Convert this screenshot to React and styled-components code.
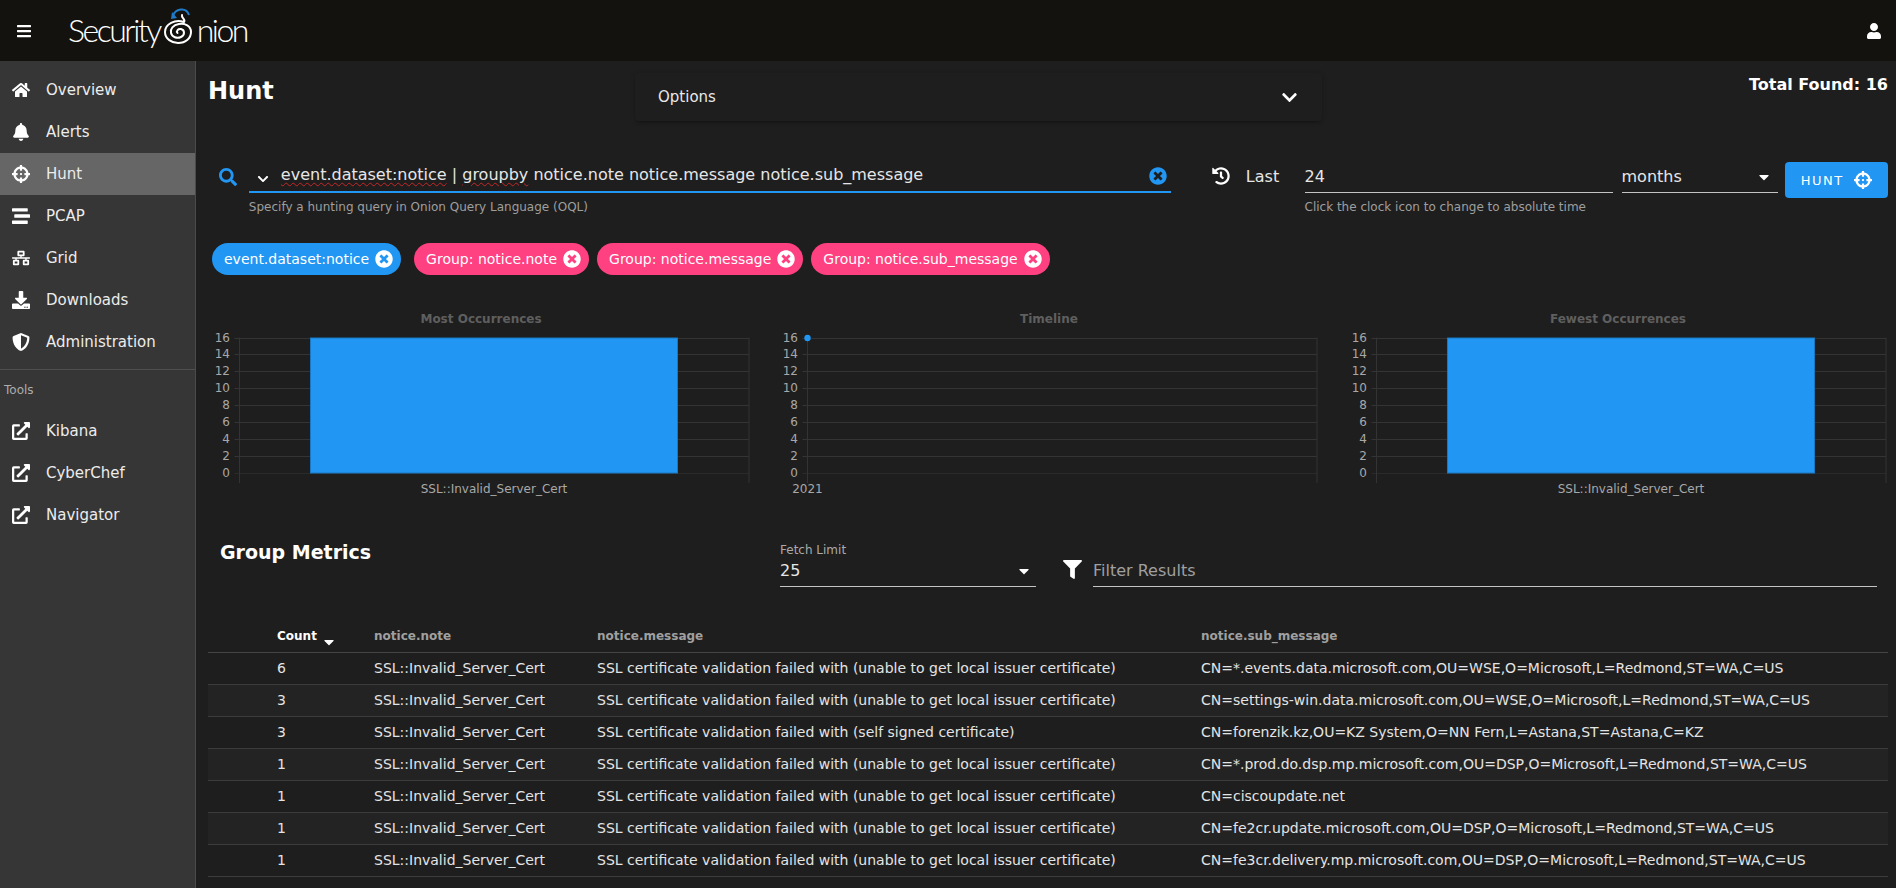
import React from 'react';
import styled, { createGlobalStyle } from 'styled-components';
import {
  FaBars, FaUser, FaHome, FaBell, FaCrosshairs, FaStream, FaNetworkWired, FaDownload,
  FaShieldAlt, FaExternalLinkAlt, FaSearch, FaChevronDown, FaTimesCircle, FaHistory,
  FaCaretDown, FaFilter,
} from 'react-icons/fa';

const BLUE = '#2196f3';
const PINK = '#ff4081';

const GlobalStyle = createGlobalStyle`
  html, body {
    margin: 0;
    height: 100%;
    background: #1e1e1e;
    overflow: hidden;
  }
  body {
    font-family: "DejaVu Sans", "Liberation Sans", sans-serif;
    color: #fff;
  }
`;

const Header = styled.header`
  height: 61px;
  display: flex;
  align-items: center;
  padding: 0 14px 0 16px;
  background: #13120e;
  font-size: 16px;
`;

const MenuButton = styled.div`
  display: flex;
  width: 52px;
`;

const Logo = styled.div`
  display: flex;
  align-items: flex-end;
  height: 45px;
  font-family: Lato, "Open Sans", sans-serif;
  font-weight: 300;
  font-size: 32px;
  line-height: 38px;
  letter-spacing: -2.5px;
  color: #fff;
`;

const LogoWord = styled.span`
  padding-bottom: 4px;
`;

const UserButton = styled.div`
  display: flex;
  margin-left: auto;
`;

const Body = styled.div`
  display: flex;
  height: 827px;
`;

const Sidebar = styled.nav`
  width: 195px;
  flex-shrink: 0;
  padding-top: 8px;
  background: #363636;
  border-right: 1px solid #4b4b4b;
`;

const NavItem = styled.div`
  display: flex;
  align-items: center;
  height: 42px;
  padding-left: 12px;
  font-size: 15px;
  color: #ececec;
  background: ${props => (props.active ? '#666666' : 'transparent')};

  svg {
    color: #fff;
    font-size: 18px;
  }
`;

const NavIcon = styled.span`
  display: flex;
  width: 34px;
`;

const NavDivider = styled.div`
  height: 1px;
  margin-top: 6px;
  background: #4f4f4f;
`;

const NavHeading = styled.div`
  height: 40px;
  padding: 13px 0 0 4px;
  box-sizing: border-box;
  font-size: 12px;
  color: #adadad;
`;

const Main = styled.main`
  flex: 1;
  min-width: 0;
  padding: 0 8px 0 13px;
`;

const TopRow = styled.div`
  display: flex;
  height: 99px;
`;

const PageTitle = styled.h1`
  width: 427px;
  flex-shrink: 0;
  margin: 15px 0 0 -1px;
  font-size: 24px;
  line-height: 30px;
  font-weight: 700;
`;

const OptionsPanel = styled.div`
  display: flex;
  align-items: center;
  justify-content: space-between;
  box-sizing: border-box;
  width: 687px;
  height: 48px;
  margin-top: 12px;
  padding: 0 24px 0 23px;
  background: #1e1e1e;
  border-radius: 4px;
  box-shadow: 0 3px 3px -2px rgba(0, 0, 0, 0.25), 0 1px 5px 0 rgba(0, 0, 0, 0.18);
  font-size: 15px;
  color: #e8e8e8;

  svg {
    font-size: 17px;
    color: #fff;
  }
`;

const TotalFound = styled.div`
  flex: 1;
  margin-top: 15px;
  text-align: right;
  font-size: 16px;
  line-height: 18px;
  font-weight: 700;
`;

const QueryRow = styled.div`
  display: flex;
  align-items: flex-start;
  height: 83px;
`;

const SearchIcon = styled.div`
  display: flex;
  width: 30px;
  margin: 8px 0 0 10px;
  color: ${BLUE};
  font-size: 18px;
`;

const FieldWrap = styled.div`
  width: ${props => props.width}px;
  margin-left: ${props => props.gap || 0}px;
  flex-shrink: 0;
`;

const FieldBox = styled.div`
  display: flex;
  align-items: center;
  box-sizing: border-box;
  height: 33px;
  padding: ${props => (props.focused ? '0 0 1px' : '2px 0 1px')};
  font-size: 16px;
  color: #e6e6e6;
  border-bottom: ${props => (props.focused ? `2px solid ${BLUE}` : '1px solid #c4c4c4')};
`;

const QueryChevron = styled.span`
  display: flex;
  width: 32px;
  padding: 7px 0 0 8px;
  box-sizing: border-box;
  color: #fff;
  font-size: 12px;
`;

const QueryText = styled.span`
  flex: 1;
  white-space: nowrap;
  overflow: hidden;
  line-height: 26px;
`;

const Misspelled = styled.span`
  text-decoration: underline wavy #c62828 1px;
  text-underline-offset: 2px;
`;

const ClearIcon = styled.span`
  display: flex;
  padding: 2px 4px 0 0;
  color: ${BLUE};
  font-size: 18px;
`;

const Hint = styled.div`
  margin-top: 7px;
  font-size: 12px;
  line-height: 14px;
  color: #9e9e9e;
`;

const ClockIcon = styled.div`
  display: flex;
  margin: 7px 0 0 41px;
  color: #fff;
  font-size: 18px;
`;

const LastLabel = styled.div`
  width: 59px;
  margin: 7px 0 0 16px;
  font-size: 16px;
  line-height: 20px;
  color: #e6e6e6;
`;

const Caret = styled.span`
  display: flex;
  margin-left: auto;
  margin-right: 6px;
  color: #fff;
  font-size: 16px;
`;

const HuntButton = styled.button`
  display: flex;
  align-items: center;
  justify-content: center;
  gap: 10px;
  width: 104px;
  height: 36px;
  margin: 2px 0 0 7px;
  border: 0;
  border-radius: 4px;
  background: ${BLUE};
  color: #fff;
  font-family: inherit;
  font-size: 13px;
  letter-spacing: 1.5px;
`;

const ChipRow = styled.div`
  display: flex;
  gap: 8px;
  height: 67px;
  margin-left: 3px;
`;

const Chip = styled.div`
  display: flex;
  align-items: center;
  gap: 6px;
  height: 32px;
  padding: 0 8px 0 12px;
  margin-right: ${props => props.spaced || 0}px;
  border-radius: 16px;
  background: ${props => props.color};
  font-size: 14px;
  color: #fff;

  svg {
    font-size: 18px;
  }
`;

const ChartRow = styled.div`
  display: grid;
  grid-template-columns: 537.5px 539.5px 538px;
  column-gap: 30px;
  height: 220px;
  margin-left: 3px;
`;

const ChartBox = styled.figure`
  margin: 0;
  height: 190px;

  svg {
    display: block;
  }
`;

const MetricsRow = styled.div`
  display: flex;
  align-items: flex-start;
  height: 90px;
`;

const MetricsTitle = styled.h2`
  width: 560px;
  flex-shrink: 0;
  margin: 10px 0 0;
  padding-left: 11px;
  font-size: 19px;
  line-height: 24px;
  font-weight: 700;
`;

const FetchLimit = styled.div`
  width: 256px;
  flex-shrink: 0;
  padding-top: 13px;
`;

const FloatLabel = styled.div`
  font-size: 12px;
  line-height: 14px;
  color: #aaa;
`;

const FetchValue = styled.div`
  display: flex;
  align-items: center;
  box-sizing: border-box;
  height: 30px;
  padding-bottom: 2px;
  border-bottom: 1px solid #c4c4c4;
  font-size: 16px;
  color: #e6e6e6;

  ${Caret} {
    margin-right: 4px;
  }
`;

const FilterIcon = styled.div`
  display: flex;
  width: 57px;
  margin-top: 30px;
  padding-left: 27px;
  box-sizing: border-box;
  color: #fff;
  font-size: 19px;
`;

const FilterField = styled.div`
  width: 784px;
  height: 32px;
  margin-top: 25px;
  box-sizing: border-box;
  display: flex;
  align-items: center;
  border-bottom: 1px solid #c4c4c4;
  font-size: 16px;
  color: #a0a0a0;
`;

const Table = styled.table`
  width: 1680px;
  margin-left: -1px;
  border-collapse: collapse;
  table-layout: fixed;
`;

const HeadCell = styled.th`
  height: 32px;
  padding: 0 0 0 ${props => props.pad || 0}px;
  border-bottom: 1px solid #444;
  text-align: left;
  font-size: 12px;
  font-weight: 700;
  color: ${props => (props.active ? '#fff' : '#a0a0a0')};

  svg {
    margin: -8px 0 -8px 4px;
    vertical-align: -1.5px;
    font-size: 16px;
  }
`;

const Row = styled.tr`
  background: ${props => (props.striped ? '#232323' : 'transparent')};
`;

const Cell = styled.td`
  height: 32px;
  padding: 0 0 2px ${props => props.pad || 0}px;
  box-sizing: border-box;
  border-bottom: 1px solid #3c3c3c;
  font-size: 14px;
  color: #e4e4e4;
  white-space: nowrap;
`;

const navTop = [
  { label: 'Overview', icon: FaHome },
  { label: 'Alerts', icon: FaBell },
  { label: 'Hunt', icon: FaCrosshairs, active: true },
  { label: 'PCAP', icon: FaStream },
  { label: 'Grid', icon: FaNetworkWired },
  { label: 'Downloads', icon: FaDownload },
  { label: 'Administration', icon: FaShieldAlt },
];

const tools = ['Kibana', 'CyberChef', 'Navigator'];

const chips = [
  { label: 'event.dataset:notice', color: BLUE, spaced: 5 },
  { label: 'Group: notice.note', color: PINK },
  { label: 'Group: notice.message', color: PINK },
  { label: 'Group: notice.sub_message', color: PINK },
];

const UNABLE = 'SSL certificate validation failed with (unable to get local issuer certificate)';
const NOTE = 'SSL::Invalid_Server_Cert';

const rows = [
  [6, NOTE, UNABLE, 'CN=*.events.data.microsoft.com,OU=WSE,O=Microsoft,L=Redmond,ST=WA,C=US'],
  [3, NOTE, UNABLE, 'CN=settings-win.data.microsoft.com,OU=WSE,O=Microsoft,L=Redmond,ST=WA,C=US'],
  [3, NOTE, 'SSL certificate validation failed with (self signed certificate)', 'CN=forenzik.kz,OU=KZ System,O=NN Fern,L=Astana,ST=Astana,C=KZ'],
  [1, NOTE, UNABLE, 'CN=*.prod.do.dsp.mp.microsoft.com,OU=DSP,O=Microsoft,L=Redmond,ST=WA,C=US'],
  [1, NOTE, UNABLE, 'CN=ciscoupdate.net'],
  [1, NOTE, UNABLE, 'CN=fe2cr.update.microsoft.com,OU=DSP,O=Microsoft,L=Redmond,ST=WA,C=US'],
  [1, NOTE, UNABLE, 'CN=fe3cr.delivery.mp.microsoft.com,OU=DSP,O=Microsoft,L=Redmond,ST=WA,C=US'],
];

const OnionMark = () => (
  <svg width="30" height="40" viewBox="0 0 30 40" fill="none" style={{ margin: '0 4px 8px 3px' }}>
    <path d="M10 11 C12 4 23 1 26 10" stroke="#1f7ac9" strokeWidth="2" />
    <path d="M9 7 L8 14 L14 13 Z" fill="#1f7ac9" />
    <path
      d="M19 10 C18 13 23 14 21 17 C12 14 2 19 2 27 C2 34 9 38 15 38 C23 38 28 33 28 27 C28 21 22 18 16 19 C10 20 7 24 8 28 C9 32 14 34 18 32 C22 30 22 25 18 24 C15 23.5 13 26 14.5 28"
      stroke="#fff"
      strokeWidth="2"
      strokeLinecap="round"
    />
  </svg>
);

// all three charts share the same axis, only the marks differ
const TICKS = [16, 14, 12, 10, 8, 6, 4, 2, 0];
const PLOT_TOP = 27.5;
const PLOT_STEP = 16.9;
const AXIS_X = 27.5;

const Chart = ({ title, right, label, labelX, children }) => (
  <ChartBox>
    <svg width="538" height="190" fontFamily="DejaVu Sans, sans-serif">
      <text x="269" y="13" textAnchor="middle" fontSize="12" fontWeight="700" fill="#5f5f5f">{title}</text>
      {TICKS.map((t, i) => {
        const y = Math.round(PLOT_TOP + i * PLOT_STEP) + 0.5;
        return (
          <g key={t}>
            <line x1={AXIS_X - 5} x2={right} y1={y} y2={y} stroke={t === 0 ? '#2a2a2a' : '#343434'} />
            <text x="18" y={y + 3.5} textAnchor="end" fontSize="12" fill="#a8a8a8">{t}</text>
          </g>
        );
      })}
      <line x1={AXIS_X} x2={AXIS_X} y1={PLOT_TOP} y2="173" stroke="#333" />
      <line x1={right} x2={right} y1={PLOT_TOP} y2="173" stroke="#333" />
      {children}
      <text x={labelX} y="183" textAnchor="middle" fontSize="12" fill="#a8a8a8">{label}</text>
    </svg>
  </ChartBox>
);

const Bar = () => (
  <rect x="98.5" y="28" width="367" height="135" fill={BLUE} stroke="#1a78c2" />
);

const App = () => (
  <>
    <GlobalStyle />
    <Header>
      <MenuButton><FaBars /></MenuButton>
      <Logo>
        <LogoWord>Security</LogoWord>
        <OnionMark />
        <LogoWord>nion</LogoWord>
      </Logo>
      <UserButton><FaUser /></UserButton>
    </Header>
    <Body>
      <Sidebar>
        {navTop.map(item => (
          <NavItem key={item.label} active={item.active}>
            <NavIcon><item.icon /></NavIcon>
            {item.label}
          </NavItem>
        ))}
        <NavDivider />
        <NavHeading>Tools</NavHeading>
        {tools.map(name => (
          <NavItem key={name}>
            <NavIcon><FaExternalLinkAlt /></NavIcon>
            {name}
          </NavItem>
        ))}
      </Sidebar>
      <Main>
        <TopRow>
          <PageTitle>Hunt</PageTitle>
          <OptionsPanel>
            Options
            <FaChevronDown />
          </OptionsPanel>
          <TotalFound>Total Found: 16</TotalFound>
        </TopRow>
        <QueryRow>
          <SearchIcon><FaSearch /></SearchIcon>
          <FieldWrap width={922}>
            <FieldBox focused>
              <QueryChevron><FaChevronDown /></QueryChevron>
              <QueryText>
                <Misspelled>event.dataset:notice</Misspelled> | <Misspelled>groupby</Misspelled> notice.note notice.message notice.sub_message
              </QueryText>
              <ClearIcon><FaTimesCircle /></ClearIcon>
            </FieldBox>
            <Hint>Specify a hunting query in Onion Query Language (OQL)</Hint>
          </FieldWrap>
          <ClockIcon><FaHistory /></ClockIcon>
          <LastLabel>Last</LastLabel>
          <FieldWrap width={308}>
            <FieldBox>24</FieldBox>
            <Hint>Click the clock icon to change to absolute time</Hint>
          </FieldWrap>
          <FieldWrap width={156} gap={9}>
            <FieldBox>
              months
              <Caret><FaCaretDown /></Caret>
            </FieldBox>
          </FieldWrap>
          <HuntButton>HUNT <FaCrosshairs size={18} /></HuntButton>
        </QueryRow>
        <ChipRow>
          {chips.map(chip => (
            <Chip key={chip.label} color={chip.color} spaced={chip.spaced}>
              {chip.label}
              <FaTimesCircle />
            </Chip>
          ))}
        </ChipRow>
        <ChartRow>
          <Chart title="Most Occurrences" right={537} label={NOTE} labelX="282">
            <Bar />
          </Chart>
          <Chart title="Timeline" right={537} label="2021" labelX={AXIS_X}>
            <circle cx={AXIS_X} cy="28" r="3.2" fill={BLUE} />
          </Chart>
          <Chart title="Fewest Occurrences" right={537} label={NOTE} labelX="282">
            <Bar />
          </Chart>
        </ChartRow>
        <MetricsRow>
          <MetricsTitle>Group Metrics</MetricsTitle>
          <FetchLimit>
            <FloatLabel>Fetch Limit</FloatLabel>
            <FetchValue>
              25
              <Caret><FaCaretDown /></Caret>
            </FetchValue>
          </FetchLimit>
          <FilterIcon><FaFilter /></FilterIcon>
          <FilterField>Filter Results</FilterField>
        </MetricsRow>
        <Table>
          <colgroup>
            <col width="166" />
            <col width="223" />
            <col width="604" />
            <col />
          </colgroup>
          <thead>
            <tr>
              <HeadCell pad={69} active>Count<FaCaretDown /></HeadCell>
              <HeadCell>notice.note</HeadCell>
              <HeadCell>notice.message</HeadCell>
              <HeadCell>notice.sub_message</HeadCell>
            </tr>
          </thead>
          <tbody>
            {rows.map((row, i) => (
              <Row key={row[3]} striped={i % 2 === 1}>
                <Cell pad={69}>{row[0]}</Cell>
                <Cell>{row[1]}</Cell>
                <Cell>{row[2]}</Cell>
                <Cell>{row[3]}</Cell>
              </Row>
            ))}
          </tbody>
        </Table>
      </Main>
    </Body>
  </>
);

export default App;
